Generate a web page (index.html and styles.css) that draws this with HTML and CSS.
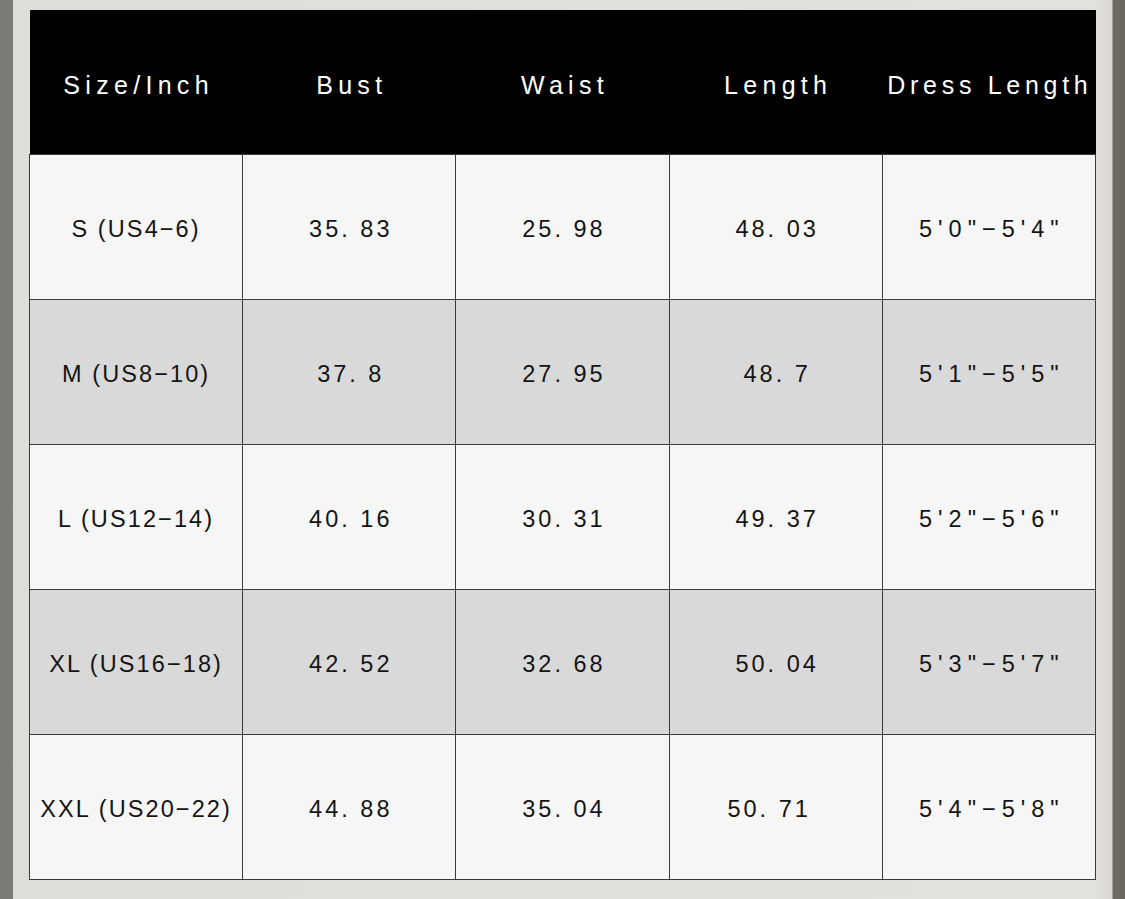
FILE: index.html
```html
<!DOCTYPE html>
<html>
<head>
<meta charset="utf-8">
<link rel="stylesheet" href="styles.css">
</head>
<body>
<div class="frame">
<table class="chart">
<thead>
<tr><th>Size/Inch</th><th>Bust</th><th>Waist</th><th>Length</th><th class="wide">Dress Length</th></tr>
</thead>
<tbody>
<tr class="light"><td class="sz">S (US4−6)</td><td>35. 83</td><td>25. 98</td><td>48. 03</td><td class="dl">5'0"−5'4"</td></tr>
<tr class="grey"><td class="sz">M (US8−10)</td><td>37. 8</td><td>27. 95</td><td>48. 7</td><td class="dl">5'1"−5'5"</td></tr>
<tr class="light"><td class="sz">L (US12−14)</td><td>40. 16</td><td>30. 31</td><td>49. 37</td><td class="dl">5'2"−5'6"</td></tr>
<tr class="grey"><td class="sz">XL (US16−18)</td><td>42. 52</td><td>32. 68</td><td>50. 04</td><td class="dl">5'3"−5'7"</td></tr>
<tr class="light"><td class="sz">XXL (US20−22)</td><td>44. 88</td><td>35. 04</td><td class="shift">50. 71</td><td class="dl">5'4"−5'8"</td></tr>
</tbody>
</table>
</div>
</body>
</html>
```

FILE: styles.css
```css
html, body {
  margin: 0;
  padding: 0;
}
body {
  width: 1125px;
  height: 899px;
  overflow: hidden;
  background: linear-gradient(to right, #7b7a73 0, #7d7c75 13px, #dedddA 13px, #e2e1de 1096px, #d8d7d3 1112px, #6f6a62 1113px, #6a655d 1125px);
}
.frame {
  padding: 10px 0 0 29px;
}
.chart {
  border-collapse: collapse;
  width: 1067px;
  table-layout: fixed;
}
.chart th {
  background: #000;
  color: #fff;
  height: 144px;
  padding: 8px 0 0 5px;
  box-sizing: border-box;
  font-family: "Liberation Sans", "DejaVu Sans", sans-serif;
  font-size: 25px;
  letter-spacing: 5.3px;
  font-weight: normal;
  text-align: center;
  white-space: nowrap;
  border-bottom: 1px solid #3a3a3a;
}
.chart th.wide {
  letter-spacing: 4.7px;
  padding-left: 2px;
}
.chart td {
  height: 139px;
  padding: 5px 0 0 3px;
  border: 1px solid #3a3a3a;
  text-align: center;
  font-family: "Liberation Sans", "Noto Sans CJK SC", sans-serif;
  font-size: 23.5px;
  letter-spacing: 3px;
  color: #141414;
  white-space: nowrap;
}
.chart td.sz {
  letter-spacing: 2.1px;
  padding-left: 0;
}
.chart td.dl {
  letter-spacing: 6px;
  padding-left: 6px;
}
.chart td.shift {
  padding-right: 16px;
}
.light td {
  background: #f6f6f6;
}
.grey td {
  background: #d9d9d9;
}
```
